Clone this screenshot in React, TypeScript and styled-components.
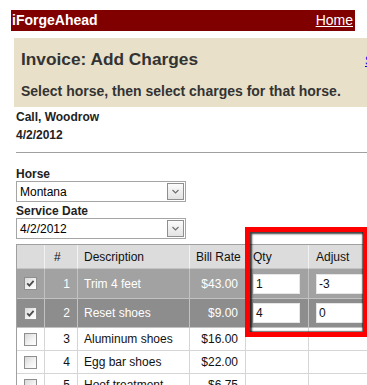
import { FC } from "react";
import styled, { createGlobalStyle } from "styled-components";

const GlobalStyle = createGlobalStyle`
  html, body {
    margin: 0;
    padding: 0;
    background: #fff;
    overflow: hidden;
  }
  body {
    font-family: "Liberation Sans", Arial, sans-serif;
    color: #000;
  }
`;

const Page = styled.div`
  position: relative;
  width: 367px;
  height: 385px;
  overflow: hidden;
  box-sizing: border-box;
  padding: 10px 0 0 11px;
`;

const TopBar = styled.div`
  width: 344px;
  height: 21px;
  box-sizing: border-box;
  padding: 0 2px 0 1px;
  display: flex;
  align-items: center;
  justify-content: space-between;
  background: #800000;
  color: #fff;
  font-size: 14px;
  line-height: 21px;
`;

const Brand = styled.span`
  font-weight: bold;
`;

const HomeLink = styled.a`
  color: #fff;
  text-decoration: underline;
`;

const Body = styled.div`
  padding-left: 3px;
`;

const HeaderPanel = styled.div`
  margin-top: 7px;
  width: 420px;
  height: 69px;
  box-sizing: border-box;
  padding: 11px 0 0 7px;
  background: #e8e0c9;
  color: #333;
`;

const TitleRow = styled.div`
  display: grid;
  grid-template-columns: 344px auto;
  align-items: baseline;
`;

const Title = styled.h1`
  margin: 0;
  font-size: 17.3px;
  line-height: 20px;
  font-weight: bold;
`;

const SideLink = styled.a`
  font-size: 12px;
  color: #0000ee;
  text-decoration: underline;
`;

const Subtitle = styled.div`
  margin-top: 14px;
  font-size: 14px;
  line-height: 17px;
  font-weight: bold;
`;

const Customer = styled.div`
  margin: 1px 0 0 2px;
  font-size: 12px;
  line-height: 18px;
  font-weight: bold;
  color: #222;
`;

const Rule = styled.div`
  margin: 8px 0 0 2px;
  height: 0;
  border-top: 1px solid #a0a0a0;
`;

const Fields = styled.div`
  margin: 15px 0 0 2px;
  display: flex;
  flex-direction: column;
`;

const FieldLabel = styled.label<{ $gap?: number }>`
  margin-top: ${(p) => p.$gap ?? 0}px;
  font-size: 12px;
  line-height: 13px;
  font-weight: bold;
  color: #222;
`;

const SelectBox = styled.div`
  width: 170px;
  height: 21px;
  box-sizing: border-box;
  border: 1px solid #a5a5a5;
  padding: 1px;
  display: flex;
  align-items: center;
  background: #fff;
  font-size: 12px;
`;

const SelectText = styled.span`
  flex: 1;
  padding-left: 2px;
`;

const DropButton = styled.span`
  width: 17px;
  height: 17px;
  box-sizing: border-box;
  border: 1px solid #8f8f8f;
  background: linear-gradient(#fbfbfb, #e3e3e3);
  display: flex;
  align-items: center;
  justify-content: center;
`;

const Chevron: FC = () => (
  <svg width="7" height="5" viewBox="0 0 7 5">
    <path d="M0.5 1 L3.5 4 L6.5 1" fill="none" stroke="#707070" strokeWidth="1.2" />
  </svg>
);

const Select: FC<{ value: string }> = ({ value }) => (
  <SelectBox>
    <SelectText>{value}</SelectText>
    <DropButton>
      <Chevron />
    </DropButton>
  </SelectBox>
);

const Grid = styled.table`
  margin: 5px 0 0 2px;
  border-collapse: separate;
  border-spacing: 0;
  table-layout: fixed;
  width: 420px;
  border-top: 1px solid #a0a0a0;
  border-left: 1px solid #a0a0a0;
  font-size: 12px;
`;

const HeadCell = styled.th<{ $pad?: number }>`
  height: 23px;
  padding: 0 0 0 ${(p) => p.$pad ?? 6}px;
  background: #dcdcdc;
  border-right: 1px solid #f2f2f2;
  border-bottom: 1px solid #c4c4c4;
  font-weight: normal;
  text-align: left;
  vertical-align: middle;
  color: #111;
`;

const Row = styled.tr<{ $bg?: string; $h: number }>`
  background: ${(p) => p.$bg ?? "#fff"};
  color: ${(p) => (p.$bg ? "#fff" : "#111")};
  & > td {
    height: ${(p) => p.$h}px;
    border-color: ${(p) => (p.$bg ? "#c2c2c2" : "#d6d6d6")};
  }
`;

const Cell = styled.td<{ $align?: string }>`
  padding: 0 7px 0 6px;
  border-right: 1px solid #d6d6d6;
  border-bottom: 1px solid #d6d6d6;
  text-align: ${(p) => p.$align ?? "left"};
  vertical-align: middle;
  white-space: nowrap;
  overflow: hidden;
`;

const CheckCell = styled(Cell)`
  padding: 0 0 0 7px;
  line-height: 0;
`;

const InputCell = styled(Cell)`
  padding: 0 0 0 7px;
`;

const Box = styled.span`
  display: inline-block;
  width: 13px;
  height: 13px;
  box-sizing: border-box;
  border: 1px solid #8e8f8f;
  background: linear-gradient(135deg, #d8d8d8 0%, #f4f4f4 60%, #ffffff 100%);
  line-height: 0;
`;

const CheckBox: FC<{ checked?: boolean }> = ({ checked }) => (
  <Box>
    {checked && (
      <svg width="11" height="11" viewBox="0 0 11 11">
        <path d="M2.2 5.4 L4.4 7.6 L8.6 2.8" fill="none" stroke="#4d4d4d" strokeWidth="1.8" />
      </svg>
    )}
  </Box>
);

const QtyInput = styled.input<{ $w: number }>`
  width: ${(p) => p.$w}px;
  height: 20px;
  box-sizing: border-box;
  margin: 0;
  padding: 0 2px;
  border: 1px solid #e6e6e6;
  background: #fff;
  font-family: "Liberation Sans", Arial, sans-serif;
  font-size: 12px;
  color: #111;
  outline: none;
`;

const Highlight = styled.div`
  position: absolute;
  left: 245px;
  top: 227px;
  width: 123px;
  height: 110px;
  box-sizing: border-box;
  border: 5px solid #ff0000;
  box-shadow: inset 1px 1px 2px 1px rgba(0, 0, 0, 0.75), inset -1px -1px 1px rgba(0, 0, 0, 0.4);
  pointer-events: none;
`;

type Charge = {
  no: number;
  desc: string;
  rate: string;
  checked?: boolean;
  qty?: string;
  adjust?: string;
  bg?: string;
  h: number;
};

const charges: Charge[] = [
  { no: 1, desc: "Trim 4 feet", rate: "$43.00", checked: true, qty: "1", adjust: "-3", bg: "#a2a2a2", h: 29 },
  { no: 2, desc: "Reset shoes", rate: "$9.00", checked: true, qty: "4", adjust: "0", bg: "#8d8d8d", h: 28 },
  { no: 3, desc: "Aluminum shoes", rate: "$16.00", h: 22 },
  { no: 4, desc: "Egg bar shoes", rate: "$22.00", h: 22 },
  { no: 5, desc: "Hoof treatment", rate: "$6.75", h: 22 },
];

export default function App() {
  return (
    <Page>
      <GlobalStyle />
      <TopBar>
        <Brand>iForgeAhead</Brand>
        <HomeLink href="#">Home</HomeLink>
      </TopBar>
      <Body>
        <HeaderPanel>
          <TitleRow>
            <Title>Invoice: Add Charges</Title>
            <SideLink href="#">Save</SideLink>
          </TitleRow>
          <Subtitle>Select horse, then select charges for that horse.</Subtitle>
        </HeaderPanel>
        <Customer>
          Call, Woodrow
          <br />
          4/2/2012
        </Customer>
        <Rule />
        <Fields>
          <FieldLabel>Horse</FieldLabel>
          <Select value="Montana" />
          <FieldLabel $gap={3}>Service Date</FieldLabel>
          <Select value="4/2/2012" />
        </Fields>
        <Grid>
          <colgroup>
            <col style={{ width: 28 }} />
            <col style={{ width: 33 }} />
            <col style={{ width: 112 }} />
            <col style={{ width: 56 }} />
            <col style={{ width: 63 }} />
            <col style={{ width: 128 }} />
          </colgroup>
          <thead>
            <tr>
              <HeadCell />
              <HeadCell $pad={9}>#</HeadCell>
              <HeadCell>Description</HeadCell>
              <HeadCell>Bill Rate</HeadCell>
              <HeadCell $pad={7}>Qty</HeadCell>
              <HeadCell $pad={7}>Adjust</HeadCell>
            </tr>
          </thead>
          <tbody>
            {charges.map((c) => (
              <Row key={c.no} $bg={c.bg} $h={c.h}>
                <CheckCell>
                  <CheckBox checked={c.checked} />
                </CheckCell>
                <Cell $align="right">{c.no}</Cell>
                <Cell>{c.desc}</Cell>
                <Cell $align="right">{c.rate}</Cell>
                <InputCell>{c.qty && <QtyInput $w={47} defaultValue={c.qty} />}</InputCell>
                <InputCell>{c.adjust && <QtyInput $w={60} defaultValue={c.adjust} />}</InputCell>
              </Row>
            ))}
          </tbody>
        </Grid>
      </Body>
      <Highlight />
    </Page>
  );
}
